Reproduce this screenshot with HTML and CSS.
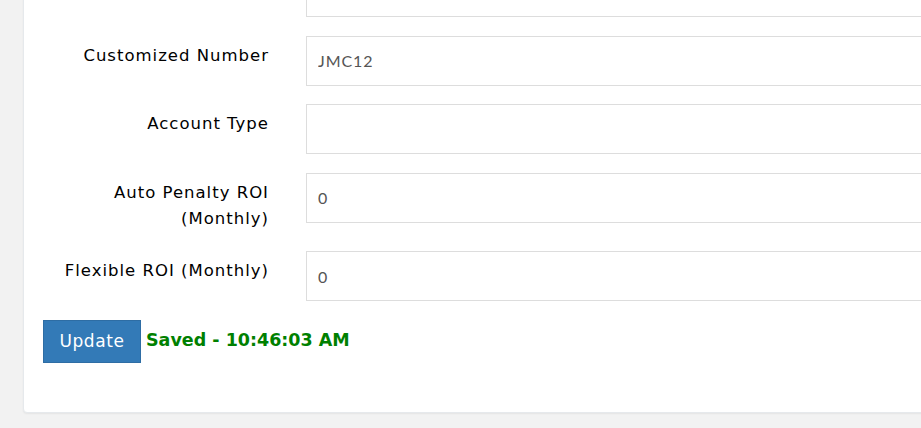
FILE: index.html
```html
<!DOCTYPE html>
<html>
<head>
<meta charset="utf-8">
<link rel="stylesheet" href="styles.css">
</head>
<body>
<div class="card">
  <form class="form">
    <div class="row">
      <label class="label"></label>
      <input class="field" type="text" value="">
    </div>
    <div class="row">
      <label class="label">Customized Number</label>
      <input class="field" type="text" value="JMC12">
    </div>
    <div class="row">
      <label class="label">Account Type</label>
      <input class="field" type="text" value="">
    </div>
    <div class="row">
      <label class="label">Auto Penalty ROI<br>(Monthly)</label>
      <input class="field" type="text" value="0">
    </div>
    <div class="row">
      <label class="label">Flexible ROI (Monthly)</label>
      <input class="field" type="text" value="0">
    </div>
    <div class="actions">
      <button class="btn" type="button">Update</button>
      <span class="status">Saved - 10:46:03 AM</span>
    </div>
  </form>
</div>
</body>
</html>
```
FILE: styles.css
```css
html, body {
  margin: 0;
  padding: 0;
}
body {
  background: #f2f2f2;
  overflow: hidden;
  height: 428px;
  font-family: "DejaVu Sans", "Open Sans", sans-serif;
}
.card {
  margin-left: 23px;
  margin-top: -53px;
  width: 1100px;
  background: #fff;
  border: 1px solid #e6e9ec;
  border-radius: 4px;
  box-shadow: 0 1px 2px rgba(0,0,0,0.06);
  padding: 19px 19px 49px 19px;
}
.form {
  display: flex;
  flex-direction: column;
}
.row {
  display: grid;
  grid-template-columns: 226px 1fr;
  column-gap: 37px;
  align-items: start;
  margin-bottom: 18.5px;
}
.label {
  text-align: right;
  font-size: 16.5px;
  letter-spacing: 1px;
  line-height: 26px;
  padding: 7px 0 1px 0;
  color: #000;
}
.field {
  box-sizing: border-box;
  height: 50px;
  width: 100%;
  border: 1px solid #ddd;
  border-radius: 0;
  padding: 0 11px;
  font-family: "Lato", "Open Sans", sans-serif;
  font-size: 16px;
  letter-spacing: 0.9px;
  color: #555;
  background: #fff;
  outline: none;
}
.actions {
  display: flex;
  align-items: center;
  gap: 5px;
}
.btn {
  box-sizing: border-box;
  width: 98px;
  height: 43px;
  background: #337ab7;
  border: 1px solid #2e6da4;
  border-radius: 0;
  color: #fff;
  font-family: "DejaVu Sans", "Open Sans", sans-serif;
  font-size: 17px;
  letter-spacing: 0.6px;
  padding: 0;
}
.status {
  color: #008000;
  font-weight: bold;
  font-size: 17.5px;
  margin-top: -2px;
}
```
